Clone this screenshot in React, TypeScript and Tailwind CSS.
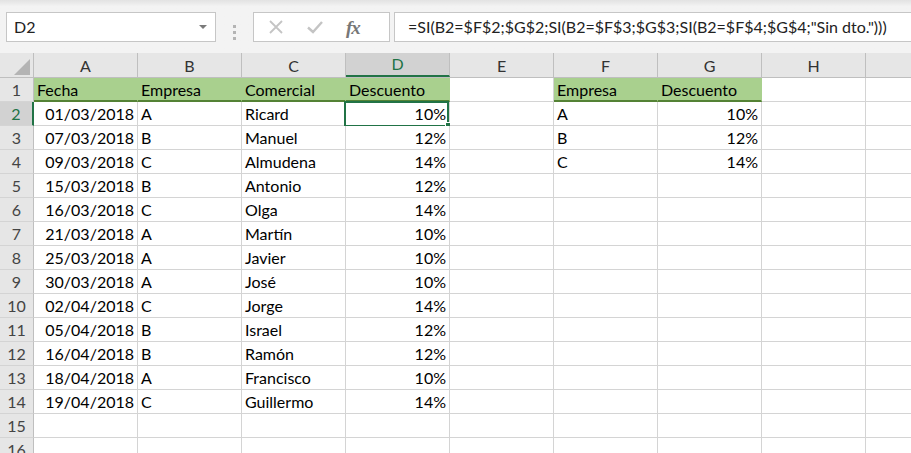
import React from "react";

const data: [string, string, string, string][] = [
  ["01/03/2018", "A", "Ricard", "10%"],
  ["07/03/2018", "B", "Manuel", "12%"],
  ["09/03/2018", "C", "Almudena", "14%"],
  ["15/03/2018", "B", "Antonio", "12%"],
  ["16/03/2018", "C", "Olga", "14%"],
  ["21/03/2018", "A", "Martín", "10%"],
  ["25/03/2018", "A", "Javier", "10%"],
  ["30/03/2018", "A", "José", "10%"],
  ["02/04/2018", "C", "Jorge", "14%"],
  ["05/04/2018", "B", "Israel", "12%"],
  ["16/04/2018", "B", "Ramón", "12%"],
  ["18/04/2018", "A", "Francisco", "10%"],
  ["19/04/2018", "C", "Guillermo", "14%"],
];

const lookup: [string, string][] = [
  ["A", "10%"],
  ["B", "12%"],
  ["C", "14%"],
];

const cols = ["A", "B", "C", "D", "E", "F", "G", "H", "I"];

type CellProps = {
  text?: string;
  right?: boolean;
  head?: boolean;
  selected?: boolean;
};

function Cell({ text, right, head, selected }: CellProps) {
  return (
    <div
      className={
        "relative w-[104px] shrink-0 h-full flex items-end px-[3px] border-r " +
        (head
          ? "bg-[#a9d08e] border-r-[#a9d08e] border-b-2 border-b-[#548235] pb-[2px]"
          : "bg-white border-r-[#d4d4d4] border-b border-b-[#d4d4d4] pb-[3px]") +
        (right ? " justify-end" : "")
      }
    >
      <span className="whitespace-nowrap leading-[16px]">{text}</span>
      {selected && (
        <>
          <div className="absolute -left-[2px] -top-[1px] right-0 -bottom-[2px] border-2 border-[#217346] pointer-events-none" />
          <div className="absolute -right-[3px] -bottom-[4px] w-[7px] h-[7px] bg-[#217346] border border-white" />
        </>
      )}
    </div>
  );
}

function RowHead({ n, active }: { n: number; active?: boolean }) {
  return (
    <div
      className={
        "w-[34px] shrink-0 h-full flex items-end justify-center pb-[3px] leading-[16px] border-b border-b-[#d4d4d4] " +
        (active
          ? "bg-[#d2d2d2] text-[#217346] border-r-2 border-r-[#217346]"
          : "bg-[#e6e6e6] text-[#444] border-r border-r-[#bfbfbf]")
      }
    >
      {n}
    </div>
  );
}

export default function App() {
  const rows: string[][] = [];
  rows.push(["Fecha", "Empresa", "Comercial", "Descuento", "", "Empresa", "Descuento", "", ""]);
  data.forEach((d, i) => {
    const l = lookup[i];
    rows.push([d[0], d[1], d[2], d[3], "", l ? l[0] : "", l ? l[1] : "", "", ""]);
  });
  rows.push(["", "", "", "", "", "", "", "", ""]);
  rows.push(["", "", "", "", "", "", "", "", ""]);

  return (
    <div
      className="w-[911px] h-[453px] overflow-hidden bg-[#f3f3f3] text-[16px] text-black"
      style={{ fontFamily: "Lato, 'Open Sans', sans-serif" }}
    >
      {/* formula bar */}
      <div className="h-[53px] bg-linear-to-b from-[#e2e2e2] via-[#f3f3f3] via-[12%] to-[#f3f3f3] pt-[12px] pl-[6px] flex">
        <div className="w-[210px] h-[30px] bg-white border border-[#c6c6c6] flex items-center pl-[7px] pr-[8px]">
          <span className="flex-1 text-[#222]">D2</span>
          <svg width="8" height="5" viewBox="0 0 8 5">
            <path d="M0 0h8L4 4z" fill="#7a7a7a" />
          </svg>
        </div>
        <div className="w-[37px] flex flex-col items-center justify-center gap-[3px]">
          <div className="w-[3px] h-[3px] bg-[#b4b4b4]" />
          <div className="w-[3px] h-[3px] bg-[#b4b4b4]" />
          <div className="w-[3px] h-[3px] bg-[#b4b4b4]" />
        </div>
        <div className="w-[137px] h-[30px] bg-white border border-[#c6c6c6] flex items-center pl-[14px] gap-[22px]">
          <svg width="16" height="16" viewBox="0 0 16 16">
            <path d="M2 2L14 14M14 2L2 14" stroke="#c4c4c4" strokeWidth="1.8" />
          </svg>
          <svg width="18" height="16" viewBox="0 0 18 16">
            <path d="M2 8.5L7 13L16 3" stroke="#c4c4c4" strokeWidth="2.4" fill="none" />
          </svg>
          <span
            className="italic text-[19px] text-[#777] leading-none font-bold tracking-[-1px]"
            style={{ fontFamily: "'Liberation Serif', serif" }}
          >
            fx
          </span>
        </div>
        <div className="ml-[4px] flex-1 h-[30px] bg-white border border-[#c6c6c6] border-r-0 flex items-center pl-[13px] whitespace-nowrap text-[#222]">
          =SI(B2=$F$2;$G$2;SI(B2=$F$3;$G$3;SI(B2=$F$4;$G$4;"Sin dto.")))
        </div>
      </div>

      {/* column headers */}
      <div className="flex h-[25px] bg-[#e6e6e6] border-b border-b-[#bfbfbf]">
        <div className="w-[34px] shrink-0 border-r border-r-[#bfbfbf] relative">
          <svg className="absolute left-[14px] top-[6px]" width="16" height="16" viewBox="0 0 16 16">
            <path d="M16 0V16H0z" fill="#b4b4b4" />
          </svg>
        </div>
        {cols.map((c) => (
          <div
            key={c}
            className={
              "w-[104px] shrink-0 flex items-end justify-center pb-[3px] leading-[16px] border-r border-r-[#bfbfbf] " +
              (c === "D"
                ? "bg-[#d2d2d2] text-[#217346] border-b-2 border-b-[#217346]"
                : "text-[#333]")
            }
          >
            {c}
          </div>
        ))}
      </div>

      {/* rows */}
      {rows.map((r, ri) => (
        <div key={ri} className="flex h-[24px]">
          <RowHead n={ri + 1} active={ri === 1} />
          {r.map((v, ci) => {
            const head = ri === 0 && (ci <= 3 || ci === 5 || ci === 6);
            const right = ri > 0 && (ci === 0 || ci === 3 || ci === 6);
            return (
              <Cell
                key={ci}
                text={v}
                head={head}
                right={right}
                selected={ri === 1 && ci === 3}
              />
            );
          })}
        </div>
      ))}
    </div>
  );
}
